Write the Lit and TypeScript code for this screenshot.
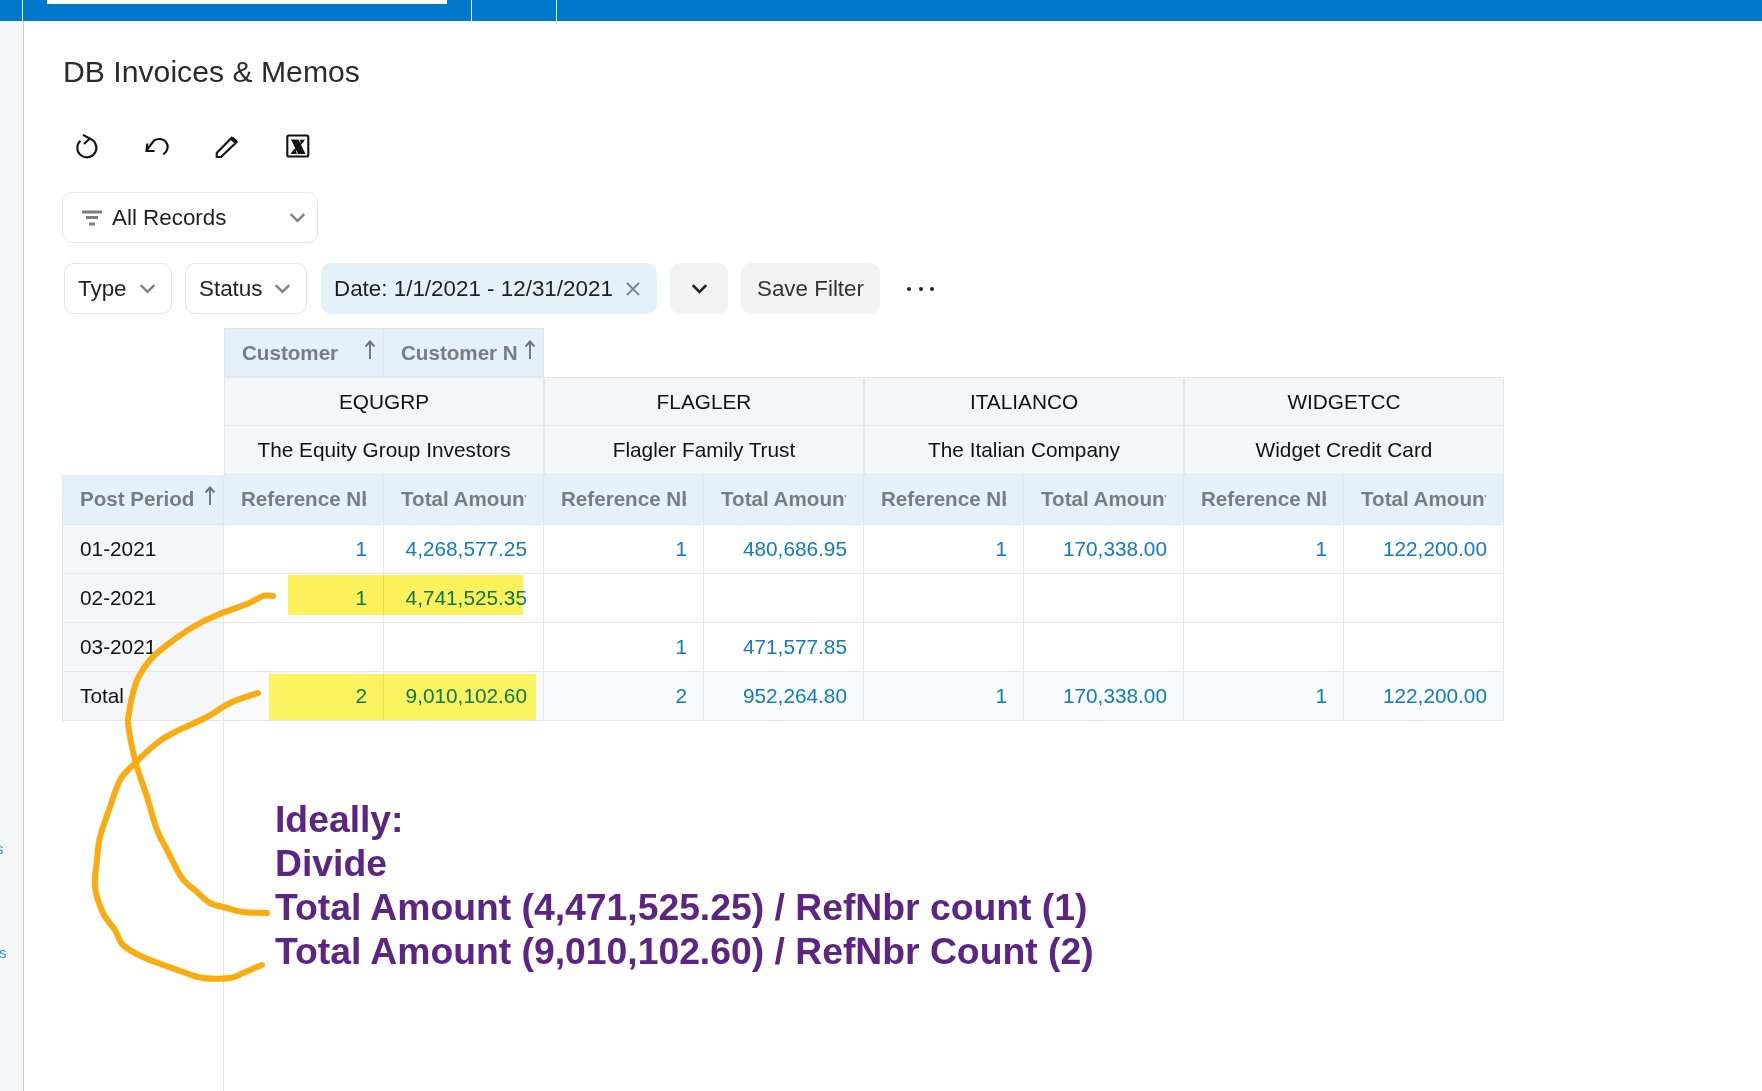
import { LitElement, html, css, svg } from "lit";
import { customElement } from "lit/decorators.js";

const customers = [
  { id: "EQUGRP", name: "The Equity Group Investors" },
  { id: "FLAGLER", name: "Flagler Family Trust" },
  { id: "ITALIANCO", name: "The Italian Company" },
  { id: "WIDGETCC", name: "Widget Credit Card" },
];
const rows: [string, string[], boolean][] = [
  ["01-2021", ["1", "4,268,577.25", "1", "480,686.95", "1", "170,338.00", "1", "122,200.00"], false],
  ["02-2021", ["1", "4,741,525.35", "", "", "", "", "", ""], false],
  ["03-2021", ["", "", "1", "471,577.85", "", "", "", ""], false],
  ["Total", ["2", "9,010,102.60", "2", "952,264.80", "1", "170,338.00", "1", "122,200.00"], true],
];
const chevron = html`<svg class="chev" viewBox="0 0 14 14"><path d="M2 4.5 7 9.5 12 4.5" /></svg>`;
const arrow = html`<svg class="sort" viewBox="0 0 12 20"><path d="M6 19V2M1.5 6.5 6 1.5 10.5 6.5" /></svg>`;

type P = [number, number];
function smooth(pts: P[]): string {
  let d = `M${pts[0][0]} ${pts[0][1]}`;
  for (let i = 0; i < pts.length - 1; i++) {
    const p0 = pts[Math.max(i - 1, 0)];
    const p1 = pts[i];
    const p2 = pts[i + 1];
    const p3 = pts[Math.min(i + 2, pts.length - 1)];
    const c1x = p1[0] + (p2[0] - p0[0]) / 6;
    const c1y = p1[1] + (p2[1] - p0[1]) / 6;
    const c2x = p2[0] - (p3[0] - p1[0]) / 6;
    const c2y = p2[1] - (p3[1] - p1[1]) / 6;
    d += ` C${c1x.toFixed(1)} ${c1y.toFixed(1)} ${c2x.toFixed(1)} ${c2y.toFixed(1)} ${p2[0]} ${p2[1]}`;
  }
  return d;
}
const curveA: P[] = [[273,596],[263,596],[247,604],[217,615],[193,627],[167,645],[150,660],[138,678],[132,697],[129,713],[128,723],[132,747],[137,767],[147,797],[157,830],[167,850],[182,878],[197,892],[210,903],[227,908],[243,912],[267,913]];
const curveB: P[] = [[258,693],[230,703],[207,717],[173,733],[157,743],[133,765],[120,780],[110,807],[100,837],[97,860],[95,887],[103,913],[115,930],[123,945],[143,957],[183,972],[203,978],[230,978],[243,973],[262,965]];

@customElement("app-root")
export class AppRoot extends LitElement {
  static styles = css`
    :host { display: block; width: 1762px; height: 1091px; position: relative; overflow: hidden; background: #fff;
      font-family: "Liberation Sans", Arial, sans-serif; color: #1f1f1f; }
    .top { height: 21px; background: #0079cc; display: flex; }
    .top .seg { border-right: 1px solid #e8f2fa; height: 100%; box-sizing: border-box; }
    .s1 { width: 23px; }
    .s2 { width: 449px; padding-left: 24px; }
    .s3 { width: 85px; }
    .tab { width: 400px; height: 4px; background: #fff; }
    .main { display: flex; height: 1070px; }
    .side { width: 24px; box-sizing: border-box; background: #f4f6f8; border-right: 1px solid #c9ccd1; overflow: hidden; color: #2f8fd3; font-size: 15px; flex: none; }
    .side span { display: block; margin-left: -4px; line-height: 16px; }
    .side .a { margin-top: 820px; }
    .side .b { margin-top: 88px; margin-left: -1px; }
    .content { flex: 1; padding-left: 38px; position: relative; }
    h1 { margin: 0; padding-top: 34px; font-weight: 400; font-size: 30.2px; line-height: 34px; color: #2b2b2b; margin-left: 1px; }
    .tools { display: flex; margin-top: 42px; height: 32px; }
    .tools svg { width: 28px; height: 28px; margin-top: 2px; fill: none; stroke: #111; stroke-width: 2.1; }
    .t1 { margin-left: 11px; } .t2 { margin-left: 42px; } .t3 { margin-left: 42px; } .t4 { margin-left: 43px; }
    .view { margin-top: 29px; width: 256px; height: 51px; box-sizing: border-box; border: 1px solid #e3e5e8; border-radius: 10px; display: flex; align-items: center; padding: 0 10px 0 19px; font-size: 22.4px; }
    .view .lbl { flex: 1; margin-left: 10px; }
    .filter { width: 20px; height: 16px; }
    .filter rect { fill: #7f7f7f; }
    .chev { width: 19px; height: 19px; fill: none; stroke: #7c7f84; stroke-width: 1.7; flex: none; }
    .chips { display: flex; margin-top: 20px; height: 51px; margin-left: 2px; align-items: stretch; font-size: 22.4px; }
    .chip { box-sizing: border-box; border: 1px solid #e3e5e8; border-radius: 10px; display: flex; align-items: center; padding: 0 13px; gap: 11px; }
    .c-type { width: 108px; margin-right: 13px; }
    .c-status { width: 122px; margin-right: 14px; }
    .c-date { width: 336px; margin-right: 13px; background: #e5f1fa; border: none; gap: 12px; }
    .c-more { width: 58px; margin-right: 13px; background: #f2f2f2; border: none; justify-content: center; }
    .c-more .chev { stroke: #222; stroke-width: 2; }
    .c-save { width: 139px; background: #f2f2f2; border: none; justify-content: center; color: #333; }
    .x { width: 16px; height: 16px; stroke: #7f8488; stroke-width: 1.8; fill: none; flex: none; }
    .dots { display: flex; gap: 7.5px; margin-left: 27px; align-items: center; }
    .dots i { width: 4px; height: 4px; border-radius: 50%; background: #222; }
    .grid { margin-top: 14px; display: grid; grid-template-columns: 162px repeat(8, 160px); grid-auto-rows: 49.15px; font-size: 20.8px; width: 1442px; position: relative; }
    .c { box-sizing: border-box; border-right: 1px solid #e3e6ea; border-bottom: 1px solid #e3e6ea; display: flex; align-items: center; overflow: hidden; white-space: nowrap; }
    .blank { border: none; }
    .wide { grid-column: span 6; }
    .h { background: #e5f1fa; color: #787d83; font-weight: 700; padding: 0 7px 0 17px; justify-content: space-between; font-size: 20.6px; }
    .h.clip { padding-right: 17px; justify-content: flex-start; }
    .h.clip span { display: block; overflow: hidden; width: 100%; }
    .h.top1 { border-top: 1px solid #e3e6ea; }
    .h.left { border-left: 1px solid #e3e6ea; }
    .sort { width: 12px; height: 20px; fill: none; stroke: #6e7378; stroke-width: 1.9; flex: none; margin-top: -6px; }
    .g { grid-column: span 2; background: #f4f6f8; color: #111; justify-content: center; }
    .g.l { border-left: 1px solid #e3e6ea; }
    .g.t { border-top: 1px solid #e3e6ea; }
    .p { background: #f4f6f8; color: #111; padding-left: 17px; border-left: 1px solid #e3e6ea; }
    .d { color: #0d7cc0; justify-content: flex-end; padding-right: 16px; }
    .tot { background: #f8fafc; }
    .rule { position: absolute; left: 199px; top: 699px; bottom: 0; width: 1px; background: #e3e6ea; }
    .note { position: absolute; left: 251px; top: 776px; font-size: 37.3px; font-weight: 700; line-height: 44px; color: #5c2483; white-space: nowrap; }
    .ink { position: absolute; left: 0; top: 0; width: 1762px; height: 1091px; pointer-events: none; }
    .hl { fill: #fbf15b; mix-blend-mode: multiply; }
    .hl2 { fill: #fff860; mix-blend-mode: multiply; }
    .curve { fill: none; stroke: #f9ab10; stroke-width: 6; stroke-linecap: round; stroke-linejoin: round; }
  `;

  render() {
    return html`
      <div class="top">
        <div class="seg s1"></div>
        <div class="seg s2"><div class="tab"></div></div>
        <div class="seg s3"></div>
      </div>
      <div class="main">
        <div class="side"><span class="a">s</span><span class="b">s</span></div>
        <div class="content">
          <h1>DB Invoices &amp; Memos</h1>
          <div class="tools">
            <svg class="t1" viewBox="0 0 28 28"><path d="M16 5.600A9.500 9.500 0 1 1 7.500 7.800" /><path d="M10 1.800 16.800 5.500 11 11" /></svg>
            <svg class="t2" viewBox="0 0 28 28"><path d="M20.300 21.500C25 18 26 13 23 9C20 5.500 15 5 11 7.500L3.800 17" /><path d="M4.300 10.500 3.500 18 11.500 18" /></svg>
            <svg class="t3" viewBox="0 0 28 28"><path d="M3.700 24V20L18.700 4.700 23.700 9 8 24Z" /><path d="M19 5.500 23 9" stroke-width="4" /></svg>
            <svg class="t4" viewBox="0 0 28 28"><rect x="3.300" y="2.500" width="21" height="21" rx="1.500" /><path d="M7 6.500H14.500L21.500 21H14Z" fill="#111" stroke="none" /><path d="M21 6.800H15.500L17.500 11ZM6.500 21H13L10.500 15.500Z" fill="#111" stroke="none" /><path d="M19.500 7.500 8.500 20.500" stroke-width="1.800" /></svg>
          </div>
          <div class="view">
            <svg class="filter" viewBox="0 0 20 16"><rect x="0" y="0.500" width="20" height="3" /><rect x="4" y="6" width="12" height="3" /><rect x="7" y="12.500" width="6" height="3" /></svg>
            <span class="lbl">All Records</span>${chevron}
          </div>
          <div class="chips">
            <div class="chip c-type"><span>Type</span>${chevron}</div>
            <div class="chip c-status"><span>Status</span>${chevron}</div>
            <div class="chip c-date"><span>Date: 1/1/2021 - 12/31/2021</span><svg class="x" viewBox="0 0 16 16"><path d="M2 2 14 14M14 2 2 14" /></svg></div>
            <div class="chip c-more">${chevron}</div>
            <div class="chip c-save">Save Filter</div>
            <div class="dots"><i></i><i></i><i></i></div>
          </div>
          <div class="grid">
            <div class="c blank"></div>
            <div class="c h top1 left">Customer ${arrow}</div>
            <div class="c h top1"><span>Customer N</span>${arrow}</div>
            <div class="c blank wide"></div>
            <div class="c blank"></div>
            ${customers.map((c) => html`<div class="c g t l">${c.id}</div>`)}
            <div class="c blank"></div>
            ${customers.map((c) => html`<div class="c g l">${c.name}</div>`)}
            <div class="c h left h-p">Post Period ${arrow}</div>
            ${customers.map(
              () => html`<div class="c h clip"><span>Reference Nbr</span></div><div class="c h clip"><span>Total Amount</span></div>`
            )}
            ${rows.map(
              ([p, vals, tot]) => html`
                <div class="c p">${p}</div>
                ${vals.map((v) => html`<div class="c d ${tot ? "tot" : ""}">${v}</div>`)}
              `
            )}
          </div>
          <div class="rule"></div>
          <div class="note">Ideally:<br />Divide<br />Total Amount (4,471,525.25) / RefNbr count (1)<br />Total Amount (9,010,102.60) / RefNbr Count (2)</div>
        </div>
      </div>
      <svg class="ink" viewBox="0 0 1762 1091">
        ${svg`
          <rect class="hl" x="288" y="575" width="235" height="40" />
          <rect class="hl2" x="269" y="674" width="267" height="46" />
          <path class="curve" d=${smooth(curveA)} />
          <path class="curve" d=${smooth(curveB)} />
        `}
      </svg>
    `;
  }
}
